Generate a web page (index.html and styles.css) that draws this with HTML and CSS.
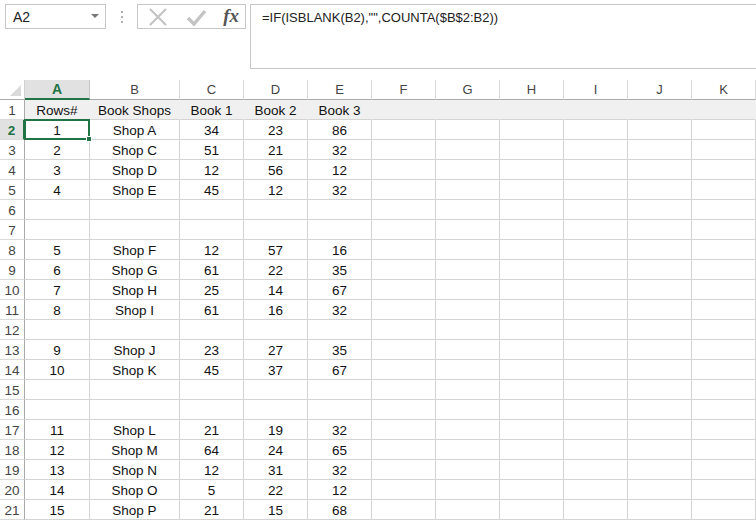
FILE: index.html
```html
<!DOCTYPE html>
<html>
<head>
<meta charset="utf-8">
<link rel="stylesheet" href="styles.css">
</head>
<body>
<div class="app">
  <div class="toolbar">
    <div class="namebox"><span class="ref">A2</span><span class="caret"></span></div>
    <div class="grip"><i></i><i></i><i></i></div>
    <div class="btns">
      <svg class="ico" width="22" height="20" viewBox="0 0 22 20"><path d="M3 2 L19 18 M19 2 L3 18" stroke="#c4c4c4" stroke-width="2.2" fill="none"/></svg>
      <svg class="ico" width="22" height="20" viewBox="0 0 22 20"><path d="M3 11 L9 17 L20 4" stroke="#c4c4c4" stroke-width="3.4" fill="none"/></svg>
      <span class="fx">fx</span>
    </div>
    <div class="formula">=IF(ISBLANK(B2),"",COUNTA($B$2:B2))</div>
  </div>
  <div class="sheet" id="sheet">
    <div class="corner"><span class="tri"></span></div>
    <div class="ch sel">A</div><div class="ch">B</div><div class="ch">C</div><div class="ch">D</div><div class="ch">E</div><div class="ch">F</div><div class="ch">G</div><div class="ch">H</div><div class="ch">I</div><div class="ch">J</div><div class="ch">K</div>

    <div class="rh">1</div><div class="c h1">Rows#</div><div class="c h1">Book Shops</div><div class="c h1">Book 1</div><div class="c h1">Book 2</div><div class="c h1">Book 3</div><div class="c h1"></div><div class="c h1"></div><div class="c h1"></div><div class="c h1"></div><div class="c h1"></div><div class="c h1"></div>

    <div class="rh rsel">2</div><div class="c active">1<span class="handle"></span></div><div class="c">Shop A</div><div class="c">34</div><div class="c">23</div><div class="c">86</div><div class="c"></div><div class="c"></div><div class="c"></div><div class="c"></div><div class="c"></div><div class="c"></div>

    <div class="rh">3</div><div class="c">2</div><div class="c">Shop C</div><div class="c">51</div><div class="c">21</div><div class="c">32</div><div class="c"></div><div class="c"></div><div class="c"></div><div class="c"></div><div class="c"></div><div class="c"></div>

    <div class="rh">4</div><div class="c">3</div><div class="c">Shop D</div><div class="c">12</div><div class="c">56</div><div class="c">12</div><div class="c"></div><div class="c"></div><div class="c"></div><div class="c"></div><div class="c"></div><div class="c"></div>

    <div class="rh">5</div><div class="c">4</div><div class="c">Shop E</div><div class="c">45</div><div class="c">12</div><div class="c">32</div><div class="c"></div><div class="c"></div><div class="c"></div><div class="c"></div><div class="c"></div><div class="c"></div>

    <div class="rh">6</div><div class="c"></div><div class="c"></div><div class="c"></div><div class="c"></div><div class="c"></div><div class="c"></div><div class="c"></div><div class="c"></div><div class="c"></div><div class="c"></div><div class="c"></div>

    <div class="rh">7</div><div class="c"></div><div class="c"></div><div class="c"></div><div class="c"></div><div class="c"></div><div class="c"></div><div class="c"></div><div class="c"></div><div class="c"></div><div class="c"></div><div class="c"></div>

    <div class="rh">8</div><div class="c">5</div><div class="c">Shop F</div><div class="c">12</div><div class="c">57</div><div class="c">16</div><div class="c"></div><div class="c"></div><div class="c"></div><div class="c"></div><div class="c"></div><div class="c"></div>

    <div class="rh">9</div><div class="c">6</div><div class="c">Shop G</div><div class="c">61</div><div class="c">22</div><div class="c">35</div><div class="c"></div><div class="c"></div><div class="c"></div><div class="c"></div><div class="c"></div><div class="c"></div>

    <div class="rh">10</div><div class="c">7</div><div class="c">Shop H</div><div class="c">25</div><div class="c">14</div><div class="c">67</div><div class="c"></div><div class="c"></div><div class="c"></div><div class="c"></div><div class="c"></div><div class="c"></div>

    <div class="rh">11</div><div class="c">8</div><div class="c">Shop I</div><div class="c">61</div><div class="c">16</div><div class="c">32</div><div class="c"></div><div class="c"></div><div class="c"></div><div class="c"></div><div class="c"></div><div class="c"></div>

    <div class="rh">12</div><div class="c"></div><div class="c"></div><div class="c"></div><div class="c"></div><div class="c"></div><div class="c"></div><div class="c"></div><div class="c"></div><div class="c"></div><div class="c"></div><div class="c"></div>

    <div class="rh">13</div><div class="c">9</div><div class="c">Shop J</div><div class="c">23</div><div class="c">27</div><div class="c">35</div><div class="c"></div><div class="c"></div><div class="c"></div><div class="c"></div><div class="c"></div><div class="c"></div>

    <div class="rh">14</div><div class="c">10</div><div class="c">Shop K</div><div class="c">45</div><div class="c">37</div><div class="c">67</div><div class="c"></div><div class="c"></div><div class="c"></div><div class="c"></div><div class="c"></div><div class="c"></div>

    <div class="rh">15</div><div class="c"></div><div class="c"></div><div class="c"></div><div class="c"></div><div class="c"></div><div class="c"></div><div class="c"></div><div class="c"></div><div class="c"></div><div class="c"></div><div class="c"></div>

    <div class="rh">16</div><div class="c"></div><div class="c"></div><div class="c"></div><div class="c"></div><div class="c"></div><div class="c"></div><div class="c"></div><div class="c"></div><div class="c"></div><div class="c"></div><div class="c"></div>

    <div class="rh">17</div><div class="c">11</div><div class="c">Shop L</div><div class="c">21</div><div class="c">19</div><div class="c">32</div><div class="c"></div><div class="c"></div><div class="c"></div><div class="c"></div><div class="c"></div><div class="c"></div>

    <div class="rh">18</div><div class="c">12</div><div class="c">Shop M</div><div class="c">64</div><div class="c">24</div><div class="c">65</div><div class="c"></div><div class="c"></div><div class="c"></div><div class="c"></div><div class="c"></div><div class="c"></div>

    <div class="rh">19</div><div class="c">13</div><div class="c">Shop N</div><div class="c">12</div><div class="c">31</div><div class="c">32</div><div class="c"></div><div class="c"></div><div class="c"></div><div class="c"></div><div class="c"></div><div class="c"></div>

    <div class="rh">20</div><div class="c">14</div><div class="c">Shop O</div><div class="c">5</div><div class="c">22</div><div class="c">12</div><div class="c"></div><div class="c"></div><div class="c"></div><div class="c"></div><div class="c"></div><div class="c"></div>

    <div class="rh">21</div><div class="c">15</div><div class="c">Shop P</div><div class="c">21</div><div class="c">15</div><div class="c">68</div><div class="c"></div><div class="c"></div><div class="c"></div><div class="c"></div><div class="c"></div><div class="c"></div>
  </div>
</div>
</body>
</html>
```

FILE: styles.css
```css
* { box-sizing: border-box; }
html, body { margin: 0; padding: 0; background: #fff; }
body { width: 756px; height: 520px; overflow: hidden; font-family: "Liberation Sans", Arial, sans-serif; }

.app { width: 756px; }

.toolbar {
  height: 80px;
  display: flex;
  align-items: flex-start;
  padding-top: 4px;
}
.namebox {
  margin-left: 5px;
  width: 101px;
  height: 25px;
  border: 1px solid #c6c6c6;
  display: flex;
  align-items: center;
  justify-content: space-between;
  padding: 1px 6px 0 7px;
  font-size: 14px;
  color: #222;
}
.caret {
  width: 0; height: 0;
  border-left: 4px solid transparent;
  border-right: 4px solid transparent;
  border-top: 4px solid #777;
  margin-top: -2px;
}
.grip {
  width: 31px;
  height: 25px;
  display: flex;
  flex-direction: column;
  align-items: center;
  justify-content: center;
  gap: 3px;
}
.grip i { display: block; width: 2px; height: 2px; background: #b0b0b0; }
.btns {
  width: 109px;
  height: 25px;
  border: 1px solid #c6c6c6;
  display: flex;
  align-items: center;
  justify-content: space-between;
  padding: 0 6px 0 9px;
}
.ico { display: block; }
.fx {
  font-family: "Liberation Serif", "Times New Roman", serif;
  font-style: italic;
  font-weight: bold;
  font-size: 19px;
  color: #555;
  line-height: 1;
  margin-top: -3px;
}
.formula {
  margin-left: 4px;
  flex: 1;
  height: 65px;
  border: 1px solid #c6c6c6;
  border-right: none;
  padding: 5px 0 0 11px;
  font-size: 13px;
  color: #222;
}

.sheet {
  display: grid;
  grid-template-columns: 25px 65px 90px repeat(9, 64px);
  grid-auto-rows: 20px;
  font-size: 13.5px;
  color: #111;
}
.corner {
  position: relative;
  border-right: 1px solid #d0d0d0;
  border-bottom: 1px solid #ababab;
}
.tri {
  position: absolute;
  right: 3px;
  bottom: 3px;
  width: 0; height: 0;
  border-left: 11px solid transparent;
  border-bottom: 11px solid #dadada;
}
.ch {
  display: flex;
  align-items: center;
  justify-content: center;
  border-right: 1px solid #dadada;
  border-bottom: 1px solid #ababab;
  color: #444;
  font-size: 13px;
}
.ch.sel {
  background: #e1e1e1;
  color: #217346;
  font-weight: bold;
  border-bottom: 2px solid #217346;
  border-right-color: #c6c6c6;
  font-size: 14px;
}
.rh {
  display: flex;
  align-items: center;
  justify-content: center;
  padding-top: 2px;
  border-right: 1px solid #ababab;
  border-bottom: 1px solid #dadada;
  color: #444;
  font-size: 13.5px;
}
.rh.rsel {
  background: #e1e1e1;
  color: #217346;
  font-weight: bold;
  border-right: 2px solid #217346;
}
.c {
  position: relative;
  display: flex;
  align-items: center;
  justify-content: center;
  padding-top: 2px;
  border-right: 1px solid #d4d4d4;
  border-bottom: 1px solid #d4d4d4;
  white-space: nowrap;
}
.c.h1 {
  background: #f0f0f0;
  border-right-color: #f0f0f0;
}
.c.active {
  border: 2px solid #217346;
  margin: -1px 0 0 -1px;
  width: 66px;
  height: 21px;
  z-index: 2;
}
.handle {
  position: absolute;
  right: -4px;
  bottom: -4px;
  width: 6px;
  height: 6px;
  background: #217346;
  border: 1px solid #fff;
}
```
